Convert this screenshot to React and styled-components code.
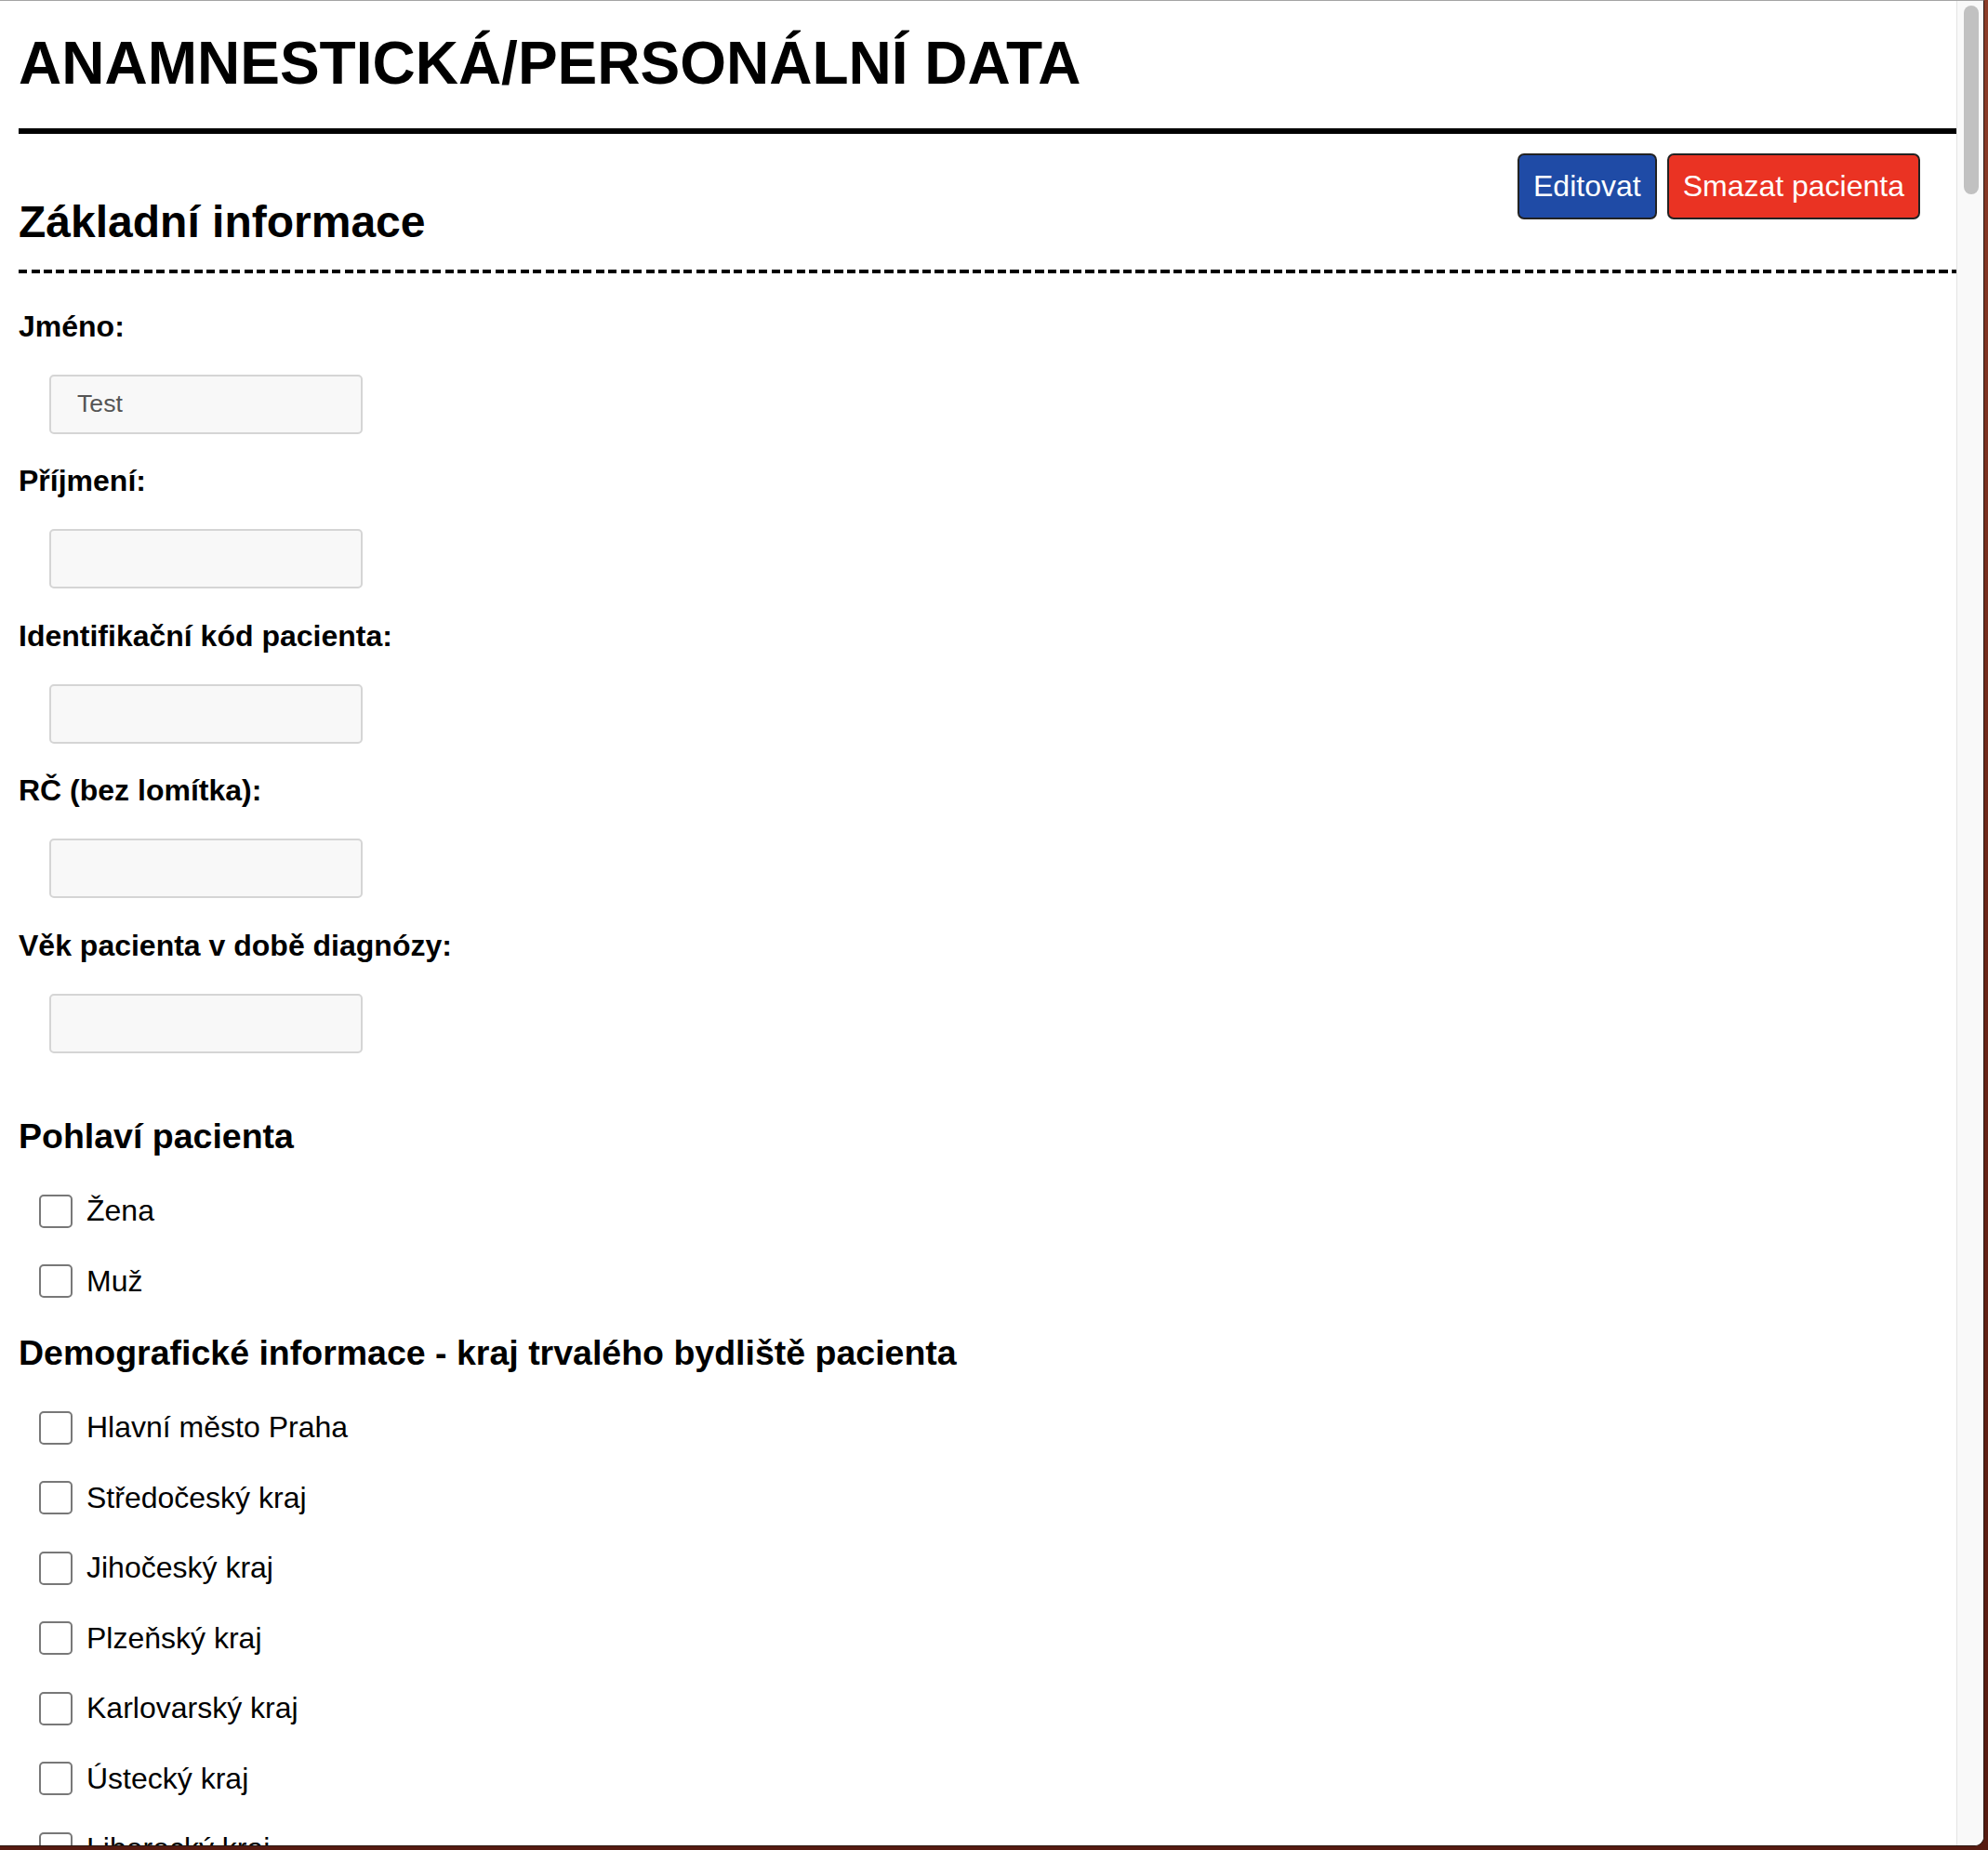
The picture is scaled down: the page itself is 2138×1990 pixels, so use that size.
import styled, { createGlobalStyle } from 'styled-components'

const GlobalStyle = createGlobalStyle`
    html, body {
        margin: 0;
        padding: 0;
    }
    body {
        height: 1990px;
        overflow: hidden;
        background: linear-gradient(180deg, #8c3d29 0%, #6b2618 50%, #561b11 100%);
        font-family: "Liberation Sans", Arial, sans-serif;
        color: #000;
    }
`;

// browser window + scrollbar
const Window = styled.div`
    width: 2134px;
    height: 1986px;
    box-sizing: border-box;
    display: flex;
    background: #fff;
    border-top: 1px solid #a4a4a4;
    border-right: 1px solid #2a1510;
    border-bottom: 1px solid #2a1510;
    border-bottom-right-radius: 10px;
    overflow: hidden;
`;

const Page = styled.main`
    flex: 1;
    min-width: 0;
    overflow: hidden;
    padding-left: 20px;
`;

const ScrollTrack = styled.div`
    width: 29px;
    flex-shrink: 0;
    box-sizing: border-box;
    border-left: 1px solid #e4e4e4;
    background: #f9f9f9;
`;

const ScrollThumb = styled.div`
    width: 16px;
    height: 203px;
    margin: 5px 0 0 7px;
    border-radius: 8px;
    background: #c1c1c1;
`;

///Header
const Title = styled.h1`
    margin: 31px 0 32px;
    font-size: 64px;
    line-height: 73.5px;
    font-weight: 700;
`;

const ThickRule = styled.div`
    height: 6px;
    background: #000;
`;

const HeaderRow = styled.div`
    display: flex;
    justify-content: space-between;
    align-items: flex-start;
`;

const SectionTitle = styled.h2`
    margin: 67px 0 0;
    font-size: 48px;
    line-height: 55px;
    font-weight: 700;
`;

const ButtonGroup = styled.div`
    display: flex;
    gap: 11px;
    margin: 21.5px 39px 0 0;
`;

const ActionButton = styled.button`
    font-family: "Liberation Sans", Arial, sans-serif;
    font-size: 32px;
    line-height: 37px;
    padding: 15px 15px;
    border: 2px solid #222;
    border-radius: 7px;
    color: #fff;
    background: ${props => props.$color};
    cursor: pointer;
`;

const DashedRule = styled.div`
    height: 4px;
    margin-top: 24px;
    background: repeating-linear-gradient(90deg, #000 0 9px, transparent 9px 13.5px);
`;

///Text fields
const FieldList = styled.div`
    display: flex;
    flex-direction: column;
    padding-top: 39.3px;
`;

const FieldLabel = styled.label`
    display: block;
    font-size: 32px;
    line-height: 37px;
    font-weight: 700;
`;

const TextInput = styled.input`
    display: block;
    width: 337px;
    height: 64px;
    margin: 33px 0 32.5px 33px;
    box-sizing: border-box;
    padding: 0 28px;
    border: 2px solid #d5d5d5;
    border-radius: 5px;
    background: #f8f8f8;
    font-family: "Liberation Sans", Arial, sans-serif;
    font-size: 26.67px;
    color: #555;
    outline: none;
`;

///Checkbox groups
const GroupTitle = styled.h3`
    margin: 36px 0 38.5px;
    font-size: 37.5px;
    line-height: 43px;
    font-weight: 700;
`;

const CheckList = styled.div`
    display: flex;
    flex-direction: column;
    gap: 35.5px;
`;

const CheckRow = styled.label`
    display: flex;
    align-items: center;
    gap: 15px;
    height: 40px;
    padding-left: 22px;
    font-size: 32px;
    line-height: 37px;
    white-space: nowrap;
`;

const CheckBox = styled.input`
    appearance: none;
    flex-shrink: 0;
    width: 36px;
    height: 36px;
    margin: 0;
    box-sizing: border-box;
    border: 2px solid #787878;
    border-radius: 5px;
    background: #fff;
`;

const fields = [
    { label: 'Jméno:', value: 'Test' },
    { label: 'Příjmení:', value: '' },
    { label: 'Identifikační kód pacienta:', value: '' },
    { label: 'RČ (bez lomítka):', value: '' },
    { label: 'Věk pacienta v době diagnózy:', value: '' },
];

const groups = [
    { title: 'Pohlaví pacienta', items: ['Žena', 'Muž'] },
    {
        title: 'Demografické informace - kraj trvalého bydliště pacienta',
        items: [
            'Hlavní město Praha',
            'Středočeský kraj',
            'Jihočeský kraj',
            'Plzeňský kraj',
            'Karlovarský kraj',
            'Ústecký kraj',
            'Liberecký kraj',
            'Královéhradecký kraj',
            'Pardubický kraj',
            'Kraj Vysočina',
        ],
    },
];

const App = () => {
  return (
    <>
        <GlobalStyle/>
        <Window>
            <Page>
                <Title>ANAMNESTICKÁ/PERSONÁLNÍ DATA</Title>
                <ThickRule/>
                <HeaderRow>
                    <SectionTitle>Základní informace</SectionTitle>
                    <ButtonGroup>
                        <ActionButton $color="#1f4ba6">Editovat</ActionButton>
                        <ActionButton $color="#ea3323">Smazat pacienta</ActionButton>
                    </ButtonGroup>
                </HeaderRow>
                <DashedRule/>
                <FieldList>
                    {fields.map(f => (
                        <div key={f.label}>
                            <FieldLabel>{f.label}</FieldLabel>
                            <TextInput type="text" readOnly defaultValue={f.value} />
                        </div>
                    ))}
                </FieldList>
                {groups.map(g => (
                    <section key={g.title}>
                        <GroupTitle>{g.title}</GroupTitle>
                        <CheckList>
                            {g.items.map(item => (
                                <CheckRow key={item}>
                                    <CheckBox type="checkbox" />
                                    {item}
                                </CheckRow>
                            ))}
                        </CheckList>
                    </section>
                ))}
            </Page>
            <ScrollTrack>
                <ScrollThumb/>
            </ScrollTrack>
        </Window>
    </>
  )
}

export default App
